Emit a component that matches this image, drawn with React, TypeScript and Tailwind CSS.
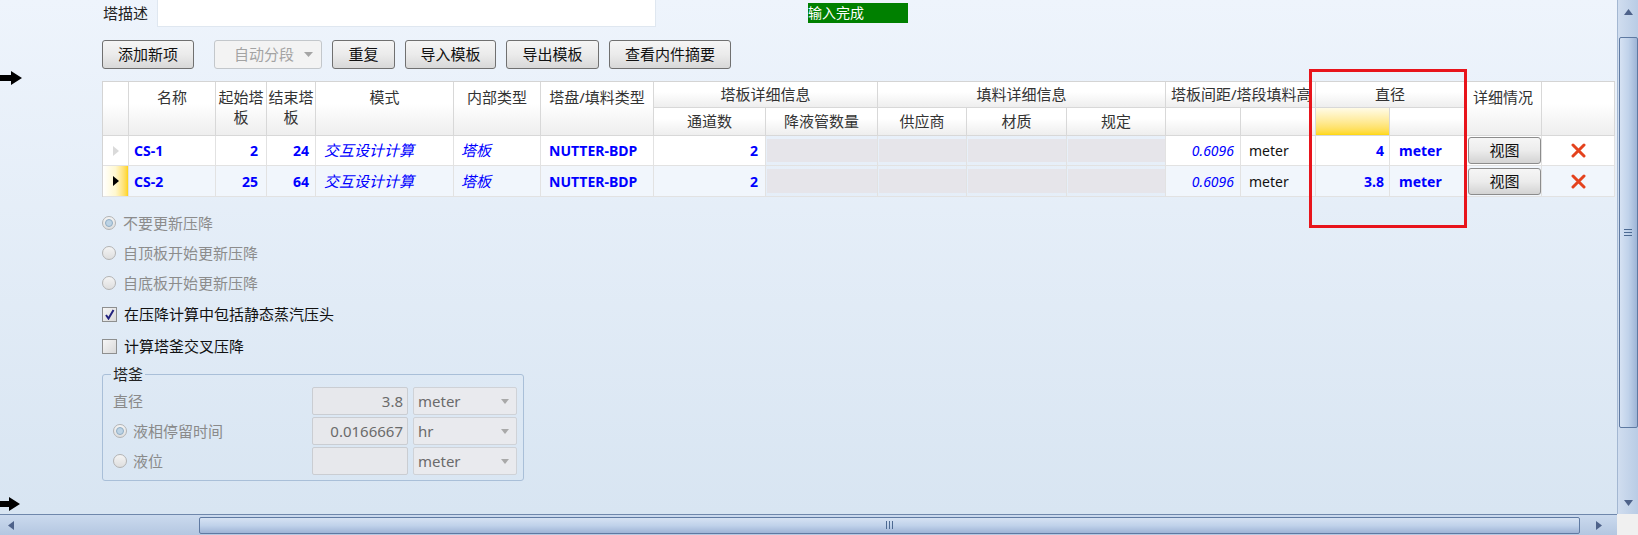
import React from "react";

const blue = "text-[#0000ff]";

const Arrow = () => (
  <svg width="23" height="14" viewBox="0 0 23 14">
    <polygon points="0,4 11,4 11,0 22,7 11,14 11,10 0,10" fill="#000" />
  </svg>
);

const RedX = () => (
  <svg width="15" height="15" viewBox="0 0 15 15">
    <path d="M2 2 L13 13 M13 2 L2 13" stroke="#e4421d" strokeWidth="3" strokeLinecap="round" />
  </svg>
);

const Radio = ({ on }: { on?: boolean }) => (
  <span className="w-[14px] h-[14px] rounded-full border border-[#b3b3b3] bg-gradient-to-b from-[#f4f4f4] to-[#dedede] flex items-center justify-center shrink-0">
    {on && <span className="w-[8px] h-[8px] rounded-full border border-[#90adc4] bg-[#bcd3e5]" />}
  </span>
);

const Check = ({ on }: { on?: boolean }) => (
  <span className="w-[15px] h-[15px] border border-[#8e8f8f] bg-gradient-to-br from-[#f6f6f6] to-[#d9d9d9] flex items-center justify-center shrink-0">
    {on && (
      <svg width="11" height="11" viewBox="0 0 11 11">
        <path d="M2 6 L4.5 9.5 L9.5 1" stroke="#22227e" strokeWidth="2" fill="none" />
      </svg>
    )}
  </span>
);

const Btn = ({ children, w }: { children: React.ReactNode; w: string }) => (
  <div className={`${w} h-[29px] rounded-[3px] border border-[#707070] bg-gradient-to-b from-[#f5f5f5] via-[#ebebeb] to-[#d8d8d8] flex items-center justify-center text-[15px] text-[#111]`}>
    {children}
  </div>
);

const hd = "border-r border-b border-[#d8d8d8] bg-gradient-to-b from-white from-40% to-[#eeeeee] text-[#333]";
const hSingle = `${hd} row-span-2 text-center pt-[5px] px-[1px] leading-[20px]`;
const hMid = `${hd} flex items-center justify-center`;
const td = "border-r border-b border-[#e2e2e2] flex items-center overflow-hidden whitespace-nowrap";

const rows = [
  { name: "CS-1", start: "2", end: "24", dia: "4", current: false },
  { name: "CS-2", start: "25", end: "64", dia: "3.8", current: true },
];

const GrayCell = () => (
  <div className="border-r border-b border-[#e2e2e2] py-[3px] pl-[1px]">
    <div className="h-full bg-[#e6e5ea]" />
  </div>
);

function Row({ r }: { r: (typeof rows)[number] }) {
  const bg = r.current ? "bg-[#f1f6fc]" : "bg-white";
  return (
    <>
      <div className={`${td} justify-center ${r.current ? "bg-gradient-to-r from-white via-[#fff8d0] to-[#ffd400]" : "bg-white"}`}>
        <svg width="6" height="10" viewBox="0 0 6 10">
          <polygon points="0,0 6,5 0,10" fill={r.current ? "#000" : "#dadada"} />
        </svg>
      </div>
      <div className={`${td} ${bg} pl-[5px] text-[14px] font-bold ${blue}`}>{r.name}</div>
      <div className={`${td} ${bg} justify-end pr-[8px] text-[14px] font-bold ${blue}`}>{r.start}</div>
      <div className={`${td} ${bg} justify-end pr-[6px] text-[14px] font-bold ${blue}`}>{r.end}</div>
      <div className={`${td} ${bg} pl-[8px] italic ${blue}`}>交互设计计算</div>
      <div className={`${td} ${bg} pl-[7px] italic ${blue}`}>塔板</div>
      <div className={`${td} ${bg} pl-[8px] text-[14px] font-bold ${blue}`}>NUTTER-BDP</div>
      <div className={`${td} ${bg} justify-end pr-[7px] text-[14px] font-bold ${blue}`}>2</div>
      <GrayCell />
      <GrayCell />
      <GrayCell />
      <GrayCell />
      <div className={`${td} ${bg} justify-end pr-[6px] text-[14px] italic ${blue}`}>0.6096</div>
      <div className={`${td} ${bg} pl-[8px] text-[14px] text-[#111]`}>meter</div>
      <div className={`${td} ${bg} justify-end pr-[5px] text-[14px] font-bold ${blue}`}>{r.dia}</div>
      <div className={`${td} ${bg} pl-[9px] text-[14px] font-bold ${blue}`}>meter</div>
      <div className={`${td} ${bg} pl-[3px]`}>
        <div className="w-[73px] h-[27px] rounded-[3px] border border-[#8c8c8c] bg-gradient-to-b from-[#f6f6f6] via-[#ececec] to-[#d3d3d3] flex items-center justify-center text-[#111]">
          视图
        </div>
      </div>
      <div className={`${td} ${bg} justify-center`}>
        <RedX />
      </div>
    </>
  );
}

const GroupRow = ({ label, value, unit }: { label: React.ReactNode; value: string; unit: string }) => (
  <div className="h-[30px] flex items-center pl-[10px] pr-[6px] gap-[5px]">
    <div className="flex-1 flex items-center gap-[6px] text-[#8a8a8a]">{label}</div>
    <div className="w-[96px] h-[28px] rounded-[2px] border border-[#cacdd2] bg-[#e7e8ec] flex items-center justify-end pr-[4px] text-[#6b6b6b]">
      {value}
    </div>
    <div className="w-[104px] h-[28px] rounded-[2px] border border-[#cfd2d7] bg-[#e9eaee] flex items-center justify-between pl-[4px] pr-[7px] text-[#6b6b6b]">
      <span>{unit}</span>
      <svg width="8" height="5" viewBox="0 0 8 5">
        <polygon points="0,0 8,0 4,5" fill="#a9a9a9" />
      </svg>
    </div>
  </div>
);

export default function App() {
  return (
    <div className="w-[1638px] h-[535px] overflow-hidden flex flex-col font-['Noto_Sans','Noto_Sans_CJK_SC',sans-serif] text-[15px]">
      <div className="flex h-[514px]">
        <main className="relative w-[1617px] bg-gradient-to-b from-[#eef4fc] to-[#d8e5f2] pl-[102px]">
          <div className="absolute left-0 top-[71px]">
            <Arrow />
          </div>
          <div className="absolute left-[-2px] top-[497px]">
            <Arrow />
          </div>

          <div className="flex h-[27px]">
            <div className="w-[55px] pl-[1px] flex items-center text-[#222]">塔描述</div>
            <div className="w-[499px] h-[28px] -mt-px bg-white border border-[#dfe7f0]" />
            <div className="ml-[152px] mt-[3px] w-[100px] h-[20px] bg-[#008000] text-white text-[14px] leading-[20px]">输入完成</div>
          </div>

          <div className="flex mt-[13px] gap-[10px]">
            <Btn w="w-[92px]">添加新项</Btn>
            <div className="ml-[10px] w-[108px] h-[29px] rounded-[3px] border border-[#c3c7cb] bg-[#f3f3f3] flex items-center justify-between pl-[19px] pr-[8px] text-[#a3a3a3]">
              <span>自动分段</span>
              <svg width="9" height="5" viewBox="0 0 9 5">
                <polygon points="0,0 9,0 4.5,5" fill="#a5a5a5" />
              </svg>
            </div>
            <Btn w="w-[63px]">重复</Btn>
            <Btn w="w-[91px]">导入模板</Btn>
            <Btn w="w-[93px]">导出模板</Btn>
            <Btn w="w-[122px]">查看内件摘要</Btn>
          </div>

          <div className="mt-[12px] w-[1513px] grid grid-cols-[26px_87px_51px_49px_138px_87px_113px_112px_112px_89px_100px_99px_75px_75px_74px_75px_77px_73px] grid-rows-[26px_28px_30px_31px] border-l border-t border-[#d4d4d4]">
            <div className={`${hd} row-span-2`} />
            <div className={hSingle}>名称</div>
            <div className={hSingle}>起始塔板</div>
            <div className={hSingle}>结束塔板</div>
            <div className={hSingle}>模式</div>
            <div className={hSingle}>内部类型</div>
            <div className={hSingle}>塔盘/填料类型</div>
            <div className={`${hMid} col-span-2`}>塔板详细信息</div>
            <div className={`${hMid} col-span-3`}>填料详细信息</div>
            <div className={`${hd} col-span-2 flex items-center pl-[5px] whitespace-nowrap`}>塔板间距/塔段填料高</div>
            <div className={`${hMid} col-span-2`}>直径</div>
            <div className={hSingle}>详细情况</div>
            <div className={`${hd} row-span-2`} />
            <div className={hMid}>通道数</div>
            <div className={hMid}>降液管数量</div>
            <div className={hMid}>供应商</div>
            <div className={hMid}>材质</div>
            <div className={hMid}>规定</div>
            <div className={hd} />
            <div className={hd} />
            <div className="border-r border-b border-[#d8d8d8] bg-gradient-to-b from-[#fffbe6] to-[#ffd800]" />
            <div className={hd} />
            {rows.map((r) => (
              <Row key={r.name} r={r} />
            ))}
          </div>

          <div className="mt-[11px] flex flex-col">
            <div className="h-[30px] flex items-center gap-[7px] text-[#8c8c8c]">
              <Radio on />
              不要更新压降
            </div>
            <div className="h-[30px] flex items-center gap-[7px] text-[#8c8c8c]">
              <Radio />
              自顶板开始更新压降
            </div>
            <div className="h-[30px] flex items-center gap-[7px] text-[#8c8c8c]">
              <Radio />
              自底板开始更新压降
            </div>
            <div className="h-[32px] flex items-center gap-[7px] text-[#111]">
              <Check on />
              在压降计算中包括静态蒸汽压头
            </div>
            <div className="h-[32px] flex items-center gap-[7px] text-[#111]">
              <Check />
              计算塔釜交叉压降
            </div>
          </div>

          <fieldset className="mt-[2px] w-[422px] border border-[#a9bfd8] rounded-[3px] pt-[2px] pb-[4px]">
            <legend className="ml-[8px] px-[2px] leading-[20px] text-[#222]">塔釜</legend>
            <GroupRow label={<span>直径</span>} value="3.8" unit="meter" />
            <GroupRow
              label={
                <>
                  <Radio on />
                  <span>液相停留时间</span>
                </>
              }
              value="0.0166667"
              unit="hr"
            />
            <GroupRow
              label={
                <>
                  <Radio />
                  <span>液位</span>
                </>
              }
              value=""
              unit="meter"
            />
          </fieldset>

          <div className="absolute left-[1309px] top-[69px] w-[158px] h-[159px] border-[3px] border-[#e8141b]" />
        </main>

        <div className="w-[21px] h-[514px] border-l border-[#a3b7d2] bg-gradient-to-r from-[#d0ddef] to-[#b9cce5] flex flex-col items-center">
          <div className="h-[37px] flex items-start pt-[9px]">
            <svg width="9" height="6" viewBox="0 0 9 6">
              <polygon points="4.5,0 9,6 0,6" fill="#4e628a" />
            </svg>
          </div>
          <div className="w-[19px] h-[391px] rounded-[2px] border border-[#5f7aa2] bg-gradient-to-r from-[#d6e2f3] via-[#c0d2ea] to-[#9eb4d6] flex flex-col items-center justify-center gap-[2px]">
            <span className="w-[8px] h-[1px] bg-[#4d6a92]" />
            <span className="w-[8px] h-[1px] bg-[#4d6a92]" />
            <span className="w-[8px] h-[1px] bg-[#4d6a92]" />
          </div>
          <div className="flex-1 flex items-end pb-[8px]">
            <svg width="9" height="6" viewBox="0 0 9 6">
              <polygon points="0,0 9,0 4.5,6" fill="#4e628a" />
            </svg>
          </div>
        </div>
      </div>

      <div className="flex h-[21px]">
        <div className="w-[1617px] border-t border-[#6f87ab] bg-gradient-to-b from-[#cbdaee] to-[#b4c7e1] flex items-center">
          <div className="w-[199px] pl-[8px] flex items-center">
            <svg width="6" height="9" viewBox="0 0 6 9">
              <polygon points="6,0 6,9 0,4.5" fill="#4e628a" />
            </svg>
          </div>
          <div className="w-[1381px] h-[17px] rounded-[2px] border border-[#5f7aa2] bg-gradient-to-b from-[#d6e2f3] via-[#c0d2ea] to-[#9eb4d6] flex items-center justify-center gap-[2px]">
            <span className="w-[1px] h-[8px] bg-[#4d6a92]" />
            <span className="w-[1px] h-[8px] bg-[#4d6a92]" />
            <span className="w-[1px] h-[8px] bg-[#4d6a92]" />
          </div>
          <div className="flex-1 flex items-center justify-center">
            <svg width="6" height="9" viewBox="0 0 6 9">
              <polygon points="0,0 6,4.5 0,9" fill="#4e628a" />
            </svg>
          </div>
        </div>
        <div className="w-[21px] bg-[#f0f0f0]" />
      </div>
    </div>
  );
}
